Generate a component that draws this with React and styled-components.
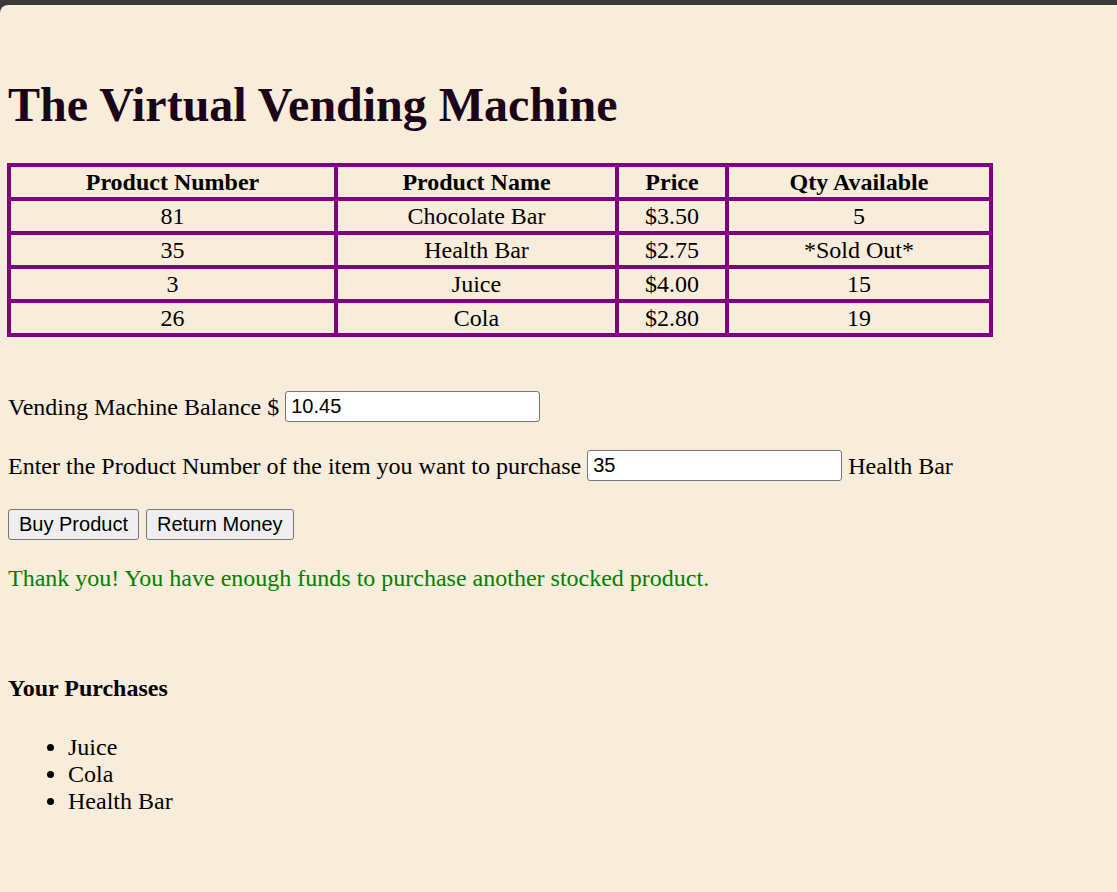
import { useState } from "react";
import styled, { createGlobalStyle } from "styled-components";

const products = [
  { id: 81, name: "Chocolate Bar", price: 3.5, qty: 5 },
  { id: 35, name: "Health Bar", price: 2.75, qty: 0 },
  { id: 3, name: "Juice", price: 4.0, qty: 15 },
  { id: 26, name: "Cola", price: 2.8, qty: 19 },
];

export default function App() {
  const [balance, setBalance] = useState("10.45");
  const [productNumber, setProductNumber] = useState("35");
  const [message, setMessage] = useState(
    "Thank you! You have enough funds to purchase another stocked product."
  );
  const [purchases, setPurchases] = useState(["Juice", "Cola", "Health Bar"]);

  const selected = products.find((p) => String(p.id) === productNumber.trim());

  const handleBuy = () => {
    if (!selected) {
      setMessage("Please enter a valid product number.");
      return;
    }
    if (selected.qty === 0) {
      setMessage("Sorry, that product is sold out.");
      return;
    }
    const funds = parseFloat(balance) || 0;
    if (funds < selected.price) {
      setMessage("Insufficient funds.");
      return;
    }
    setBalance((funds - selected.price).toFixed(2));
    setPurchases([...purchases, selected.name]);
  };

  const handleReturn = () => {
    setBalance("0.00");
    setMessage("Your money has been returned.");
  };

  return (
    <>
      <GlobalStyle />
      <Page>
        <Title>The Virtual Vending Machine</Title>
        <ProductTable>
          <colgroup>
            <Col width={327} />
            <Col width={281} />
            <Col width={110} />
            <Col width={264} />
          </colgroup>
          <thead>
            <tr>
              <HeadCell>Product Number</HeadCell>
              <HeadCell>Product Name</HeadCell>
              <HeadCell>Price</HeadCell>
              <HeadCell>Qty Available</HeadCell>
            </tr>
          </thead>
          <tbody>
            {products.map((p) => (
              <tr key={p.id}>
                <Cell>{p.id}</Cell>
                <Cell>{p.name}</Cell>
                <Cell>${p.price.toFixed(2)}</Cell>
                <Cell>{p.qty === 0 ? "*Sold Out*" : p.qty}</Cell>
              </tr>
            ))}
          </tbody>
        </ProductTable>

        <FormRow first>
          <span>Vending Machine Balance $</span>
          <TextInput value={balance} onChange={(e) => setBalance(e.target.value)} />
        </FormRow>
        <FormRow>
          <span>Enter the Product Number of the item you want to purchase</span>
          <TextInput
            value={productNumber}
            onChange={(e) => setProductNumber(e.target.value)}
          />
          <span>{selected ? selected.name : ""}</span>
        </FormRow>
        <ButtonRow>
          <Button onClick={handleBuy}>Buy Product</Button>
          <Button onClick={handleReturn}>Return Money</Button>
        </ButtonRow>
        <Message>{message}</Message>

        <SectionTitle>Your Purchases</SectionTitle>
        <PurchaseList>
          {purchases.map((name, i) => (
            <li key={i}>{name}</li>
          ))}
        </PurchaseList>
      </Page>
    </>
  );
}

const GlobalStyle = createGlobalStyle`
  html, body {
    margin: 0;
    background: #3a3a3a;
  }
  body {
    padding-top: 5px;
    font-family: "Liberation Serif", "Times New Roman", serif;
    color: #000;
  }
`;

const Page = styled.div`
  background: #f8ecdb;
  border-top-left-radius: 8px;
  min-height: calc(100vh - 5px);
  box-sizing: border-box;
  padding: 8px;
  font-size: 24px;
`;

const Title = styled.h1`
  font-size: 48px;
  line-height: 53px;
  font-weight: bold;
  color: #1c0418;
  margin: 65px 0 32px;
`;

const ProductTable = styled.table`
  border-collapse: collapse;
  table-layout: fixed;
  width: 986px;
  margin-left: -1px;
  border: 4px solid #800080;
`;

const Col = styled.col`
  width: ${(props) => props.width}px;
`;

const HeadCell = styled.th`
  border: 4px solid #800080;
  padding: 1px;
  line-height: 28px;
  font-size: 24px;
  font-weight: bold;
  text-align: center;
`;

const Cell = styled.td`
  border: 4px solid #800080;
  padding: 1px;
  line-height: 28px;
  font-size: 24px;
  text-align: center;
`;

const FormRow = styled.div`
  display: flex;
  align-items: center;
  gap: 6px;
  height: 31px;
  margin-top: ${(props) => (props.first ? "54px" : "28px")};
  line-height: 28px;
`;

const TextInput = styled.input`
  box-sizing: border-box;
  width: 255px;
  height: 31px;
  padding: 1px 5px;
  border: 1px solid #767676;
  border-radius: 3px;
  background: #fff;
  font-family: "Liberation Sans", Arial, sans-serif;
  font-size: 20px;
  color: #000;
`;

const ButtonRow = styled.div`
  display: flex;
  gap: 7px;
  margin-top: 28px;
`;

const Button = styled.button`
  box-sizing: border-box;
  height: 31px;
  padding: 1px 10px;
  border: 1px solid #767676;
  border-radius: 3px;
  background: #efefef;
  font-family: "Liberation Sans", Arial, sans-serif;
  font-size: 20px;
  color: #000;
  cursor: pointer;
  &:hover {
    background: #e5e5e5;
  }
`;

const Message = styled.p`
  color: #008000;
  line-height: 28px;
  margin: 24px 0 0;
`;

const SectionTitle = styled.h4`
  font-size: 24px;
  font-weight: bold;
  line-height: 28px;
  margin: 82px 0 0;
`;

const PurchaseList = styled.ul`
  margin: 32px 0 0;
  padding-left: 60px;
  line-height: 27px;
`;
